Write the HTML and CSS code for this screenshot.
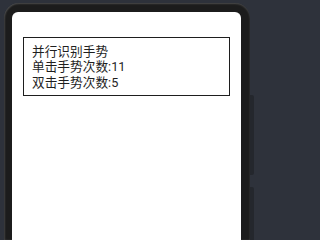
FILE: index.html
```html
<!DOCTYPE html>
<html lang="zh">
<head>
<meta charset="utf-8">
<link rel="stylesheet" href="styles.css">
</head>
<body>
<div class="device">
  <span class="side-btn btn-a"></span>
  <span class="side-btn btn-b"></span>
  <div class="screen">
    <div class="panel">
      <div class="line">并行识别手势</div>
      <div class="line">单击手势次数:11</div>
      <div class="line">双击手势次数:5</div>
    </div>
  </div>
</div>
</body>
</html>
```
FILE: styles.css
```css
html, body {
  margin: 0;
  padding: 0;
}
body {
  width: 260px;
  height: 240px;
  overflow: hidden;
  background: #2e323b;
  font-family: Roboto, "Noto Sans CJK SC", sans-serif;
}
.device {
  position: relative;
  display: flex;
  flex-direction: column;
  margin: 3px 0 0 4px;
  width: 246px;
  height: 237px;
  box-sizing: border-box;
  padding: 9px 9px 0 8px;
  background: #1c1c1c;
  border-radius: 15px 15px 0 0;
  box-shadow: inset 0 1px 2px rgba(255,255,255,0.18), inset 1px 0 2px rgba(255,255,255,0.12);
}
.side-btn {
  position: absolute;
  left: 246px;
  width: 4px;
  background: #24272d;
  border-radius: 0 2px 2px 0;
}
.btn-a {
  top: 92px;
  height: 80px;
}
.btn-b {
  top: 184px;
  height: 53px;
  border-radius: 0 2px 0 0;
}
.screen {
  flex: 1;
  background: #ffffff;
  border-radius: 6px 6px 0 0;
  padding-top: 25px;
  box-sizing: border-box;
}
.panel {
  margin: 0 11px 0 11px;
  border: 1px solid #1e1e1e;
  padding: 6px 8px 5px;
  color: #1f1f1f;
  font-size: 12.7px;
  line-height: 15.3px;
}
.line {
  white-space: nowrap;
}
```
